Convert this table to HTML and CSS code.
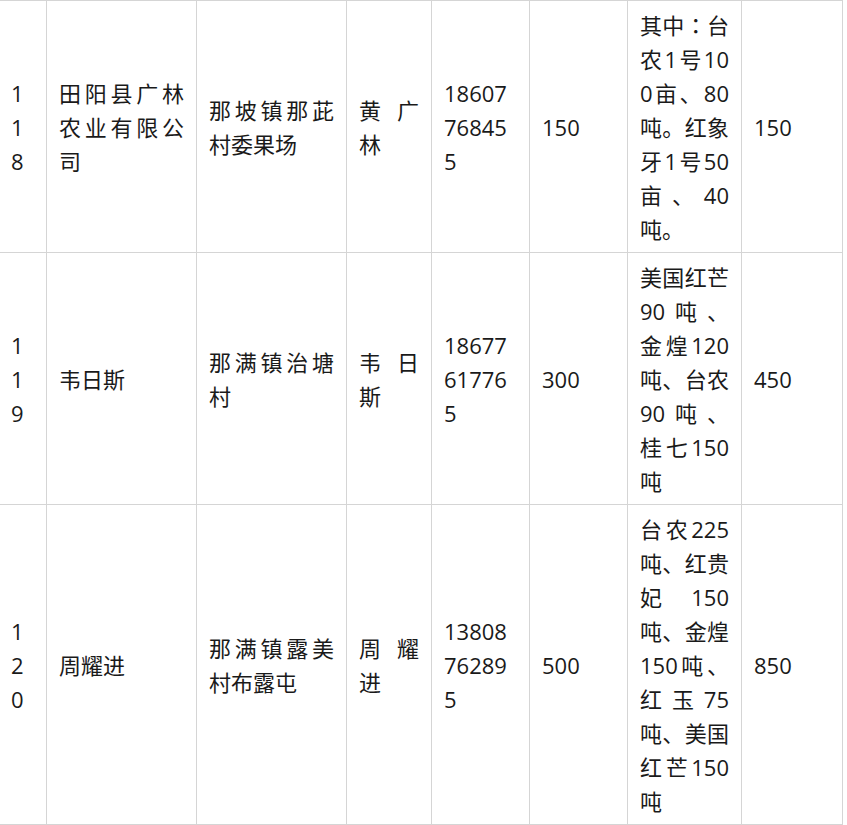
FILE: index.html
```html
<!DOCTYPE html>
<html lang="zh-CN">
<head>
<meta charset="utf-8">
<title>芒果种植户名单</title>
<link rel="stylesheet" href="styles.css">
</head>
<body>
<table class="sheet">
  <colgroup>
    <col class="c-no">
    <col class="c-name">
    <col class="c-addr">
    <col class="c-person">
    <col class="c-phone">
    <col class="c-area">
    <col class="c-detail">
    <col class="c-total">
  </colgroup>
  <tbody>
    <tr>
      <td>118</td>
      <td>田阳县广林农业有限公司</td>
      <td>那坡镇那茈村委果场</td>
      <td>黄广林</td>
      <td>18607768455</td>
      <td>150</td>
      <td>其中<span class="colon" lang="zh-TW">：</span>台农1号100亩、80吨。红象牙1号50亩、40吨。</td>
      <td>150</td>
    </tr>
    <tr>
      <td>119</td>
      <td>韦日斯</td>
      <td>那满镇治塘村</td>
      <td>韦日斯</td>
      <td>18677617765</td>
      <td>300</td>
      <td>美国红芒90吨、金煌120吨、台农90吨、桂七150吨</td>
      <td>450</td>
    </tr>
    <tr>
      <td>120</td>
      <td>周耀进</td>
      <td>那满镇露美村布露屯</td>
      <td>周耀进</td>
      <td>13808762895</td>
      <td>500</td>
      <td>台农225吨、红贵妃 150吨、金煌150吨、红玉75吨、美国红芒150吨</td>
      <td>850</td>
    </tr>
  </tbody>
</table>
</body>
</html>
```
FILE: styles.css
```css
html, body {
  margin: 0;
  padding: 0;
  background: #ffffff;
}

body {
  font-family: "Open Sans", "Noto Sans CJK SC", sans-serif;
  font-size: 22px;
  line-height: 34px;
  color: #1a1a1a;
}

.sheet {
  margin-left: -2px;
  border-collapse: collapse;
  table-layout: fixed;
  width: 844px;
}

.sheet td {
  border: 1px solid #d5d5d5;
  padding: 7px 12px 6px;
  vertical-align: middle;
  text-align: justify;
  word-break: break-all;
}

.colon {
  font-family: "Open Sans", "Noto Sans CJK TC", sans-serif;
}

.c-no { width: 48px; }
.c-name { width: 150px; }
.c-addr { width: 150px; }
.c-person { width: 85px; }
.c-phone { width: 98px; }
.c-area { width: 98px; }
.c-detail { width: 114px; }
.c-total { width: 101px; }
```
